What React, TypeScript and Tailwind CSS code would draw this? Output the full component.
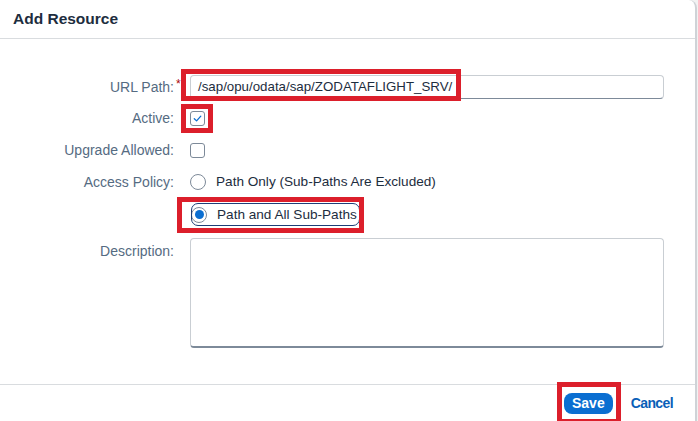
import React from 'react';

const labelCls = 'w-[176px] shrink-0 pr-[2px] text-right text-[14px] text-[#556b82]';

const Checkbox: React.FC<{ checked?: boolean }> = ({ checked }) => (
  <div className="w-[15px] h-[15px] rounded-[3px] border border-[#7d8a99] bg-white flex items-center justify-center">
    {checked && (
      <svg width="11" height="11" viewBox="0 0 12 12" fill="none">
        <path d="M2.5 6.3 5 8.6 9.6 3.4" stroke="#0a6ed1" strokeWidth="1.4" strokeLinecap="round" strokeLinejoin="round" />
      </svg>
    )}
  </div>
);

const Radio: React.FC<{ selected?: boolean; label: string }> = ({ selected, label }) => (
  <div className="flex items-center gap-[10px]">
    <div className="w-[16px] h-[16px] rounded-full border border-[#7d8a99] bg-white flex items-center justify-center">
      {selected && <div className="w-[9px] h-[9px] rounded-full bg-[#0a6ed1]" />}
    </div>
    <span className="text-[13.6px] text-[#1d2d3e]">{label}</span>
  </div>
);

// red annotation frames drawn over the dialog
const Mark: React.FC<{ className: string }> = ({ className }) => (
  <div className={`absolute border-[5px] border-[#dc1f2b] pointer-events-none ${className}`} />
);

export default function App() {
  return (
    <div className="w-[698px] h-[421px] bg-[#f2f2f2]" style={{ fontFamily: '"Liberation Sans", Arial, sans-serif' }}>
      <div className="relative w-[697px] h-[421px] bg-white border-r-2 border-[#cfd3d7] rounded-tr-[8px] flex flex-col overflow-hidden">
        {/* Header */}
        <div className="h-[39px] shrink-0 border-b border-[#d9dcdf] flex items-center pl-[13px]">
          <h1 className="text-[15.5px] font-bold text-[#1d2d3e] -mt-[1px]">Add Resource</h1>
        </div>

        {/* Body */}
        <div className="flex-1 pt-[33px] pr-[31px] flex flex-col">
          <div className="h-[30px] flex items-center">
            <div className={labelCls}>
              URL Path:<span className="absolute ml-[2px] text-[#aa0808] text-[12px] -mt-[2px]">*</span>
            </div>
            <div className="ml-[14px] flex-1 h-[24px] rounded-[4px] border border-[#c9ced3] border-b-[#7d8a99] flex items-center px-[7px] text-[13.3px] text-[#1d2d3e]">
              /sap/opu/odata/sap/ZODATAFLIGHT_SRV/
            </div>
          </div>

          <div className="h-[32px] flex items-center">
            <div className={labelCls}>Active:</div>
            <div className="ml-[14px]">
              <Checkbox checked />
            </div>
          </div>

          <div className="h-[32px] flex items-center">
            <div className={labelCls}>Upgrade Allowed:</div>
            <div className="ml-[14px]">
              <Checkbox />
            </div>
          </div>

          <div className="h-[32px] flex items-center">
            <div className={labelCls}>Access Policy:</div>
            <div className="ml-[14px]">
              <Radio label="Path Only (Sub-Paths Are Excluded)" />
            </div>
          </div>

          <div className="h-[34px] flex items-center">
            <div className={labelCls} />
            <div className="ml-[15px]">
              <Radio selected label="Path and All Sub-Paths" />
            </div>
          </div>

          <div className="mt-[6px] flex items-start">
            <div className={`${labelCls} pt-[3px]`}>Description:</div>
            <div className="ml-[14px] flex-1 h-[110px] rounded-[4px] border border-[#c9ced3] border-b-[#7d8a99] border-b-2 bg-white" />
          </div>
        </div>

        {/* Footer */}
        <div className="h-[37px] shrink-0 border-t border-[#d9dcdf] flex items-center justify-end gap-[18px] pr-[22px]">
          <button className="h-[21px] px-[8px] rounded-[8px] bg-[#0a6ed1] text-white text-[14px] font-bold leading-none">
            Save
          </button>
          <button className="text-[14px] tracking-[-0.6px] font-bold text-[#0a5fb8] leading-none">Cancel</button>
        </div>

        {/* focus ring on the selected radio */}
        <div className="absolute left-[191px] top-[203px] w-[169px] h-[23px] rounded-[7px] border border-[#1d3f77] pointer-events-none" />

        <Mark className="left-[181px] top-[69px] w-[280px] h-[32px]" />
        <Mark className="left-[181px] top-[104px] w-[32px] h-[29px]" />
        <Mark className="left-[177px] top-[197px] w-[187px] h-[36px]" />
        <Mark className="left-[557px] top-[382px] w-[64px] h-[42px]" />
      </div>
    </div>
  );
}
